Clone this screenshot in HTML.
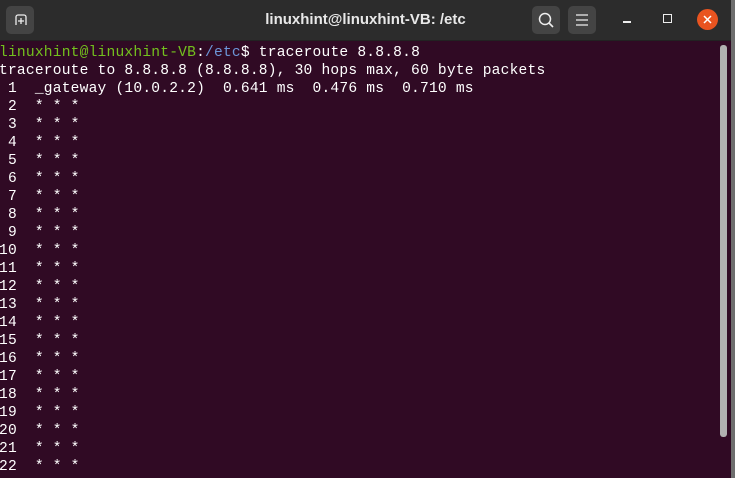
<!DOCTYPE html>
<html><head><style>
body{margin:0;width:735px;height:478px;overflow:hidden;background:#300a24;position:relative;font-family:"Liberation Sans",sans-serif}
#tb{position:absolute;left:0;top:0;width:731px;height:40px;background:#2c2c2c;border-bottom:1px solid #222}
#edge{position:absolute;right:0;top:0;width:4px;height:478px;background:#6e6e6e}
.btn{position:absolute;top:6px;width:28px;height:28px;background:#444;border-radius:5px}
#title{position:absolute;left:0;width:731px;top:11px;text-align:center;color:#e8e8e8;font-weight:bold;font-size:15px}
#term{position:absolute;left:-1px;top:44px;font-family:"Liberation Mono",monospace;font-size:14.6px;letter-spacing:0.2px;line-height:18px;color:#fff;white-space:pre;margin:0}
.g{color:#73c01e}.b{color:#6d96d8}
#sb{position:absolute;left:720px;top:45px;width:7px;height:392px;background:#b0b0b0;border-radius:3px}
</style></head><body>
<div id="tb">
<div class="btn" style="left:6px"><svg width="28" height="28"><path d="M10 19V11a2 2 0 0 1 2-2h6a2 2 0 0 1 2 2v8" fill="none" stroke="#eee" stroke-width="1.3"/><path d="M15 12v6M12 15h6" stroke="#eee" stroke-width="1.3"/></svg></div>
<div id="title">linuxhint@linuxhint-VB: /etc</div>
<div class="btn" style="left:532px"><svg width="28" height="28"><circle cx="13" cy="13" r="5.5" fill="none" stroke="#eee" stroke-width="1.5"/><path d="M17 17l4 4" stroke="#eee" stroke-width="1.6"/></svg></div>
<div class="btn" style="left:568px"><svg width="28" height="28"><path d="M8 9h12M8 14h12M8 19h12" stroke="#eee" stroke-width="1.3"/></svg></div>
<div style="position:absolute;left:623px;top:21px;width:8px;height:1.5px;background:#eee"></div>
<div style="position:absolute;left:663px;top:14px;width:7px;height:7px;border:1.3px solid #eee"></div>
<div style="position:absolute;left:697px;top:9px;width:21px;height:21px;border-radius:50%;background:#e95420"><svg width="21" height="21"><path d="M7 7l7 7M14 7l-7 7" stroke="#fff" stroke-width="1.5"/></svg></div>
</div>
<pre id="term"><span class="g">linuxhint@linuxhint-VB</span>:<span class="b">/etc</span>$ traceroute 8.8.8.8
traceroute to 8.8.8.8 (8.8.8.8), 30 hops max, 60 byte packets
 1  _gateway (10.0.2.2)  0.641 ms  0.476 ms  0.710 ms
 2  * * *
 3  * * *
 4  * * *
 5  * * *
 6  * * *
 7  * * *
 8  * * *
 9  * * *
10  * * *
11  * * *
12  * * *
13  * * *
14  * * *
15  * * *
16  * * *
17  * * *
18  * * *
19  * * *
20  * * *
21  * * *
22  * * *</pre>
<div id="sb"></div>
<div id="edge"></div>
</body></html>
